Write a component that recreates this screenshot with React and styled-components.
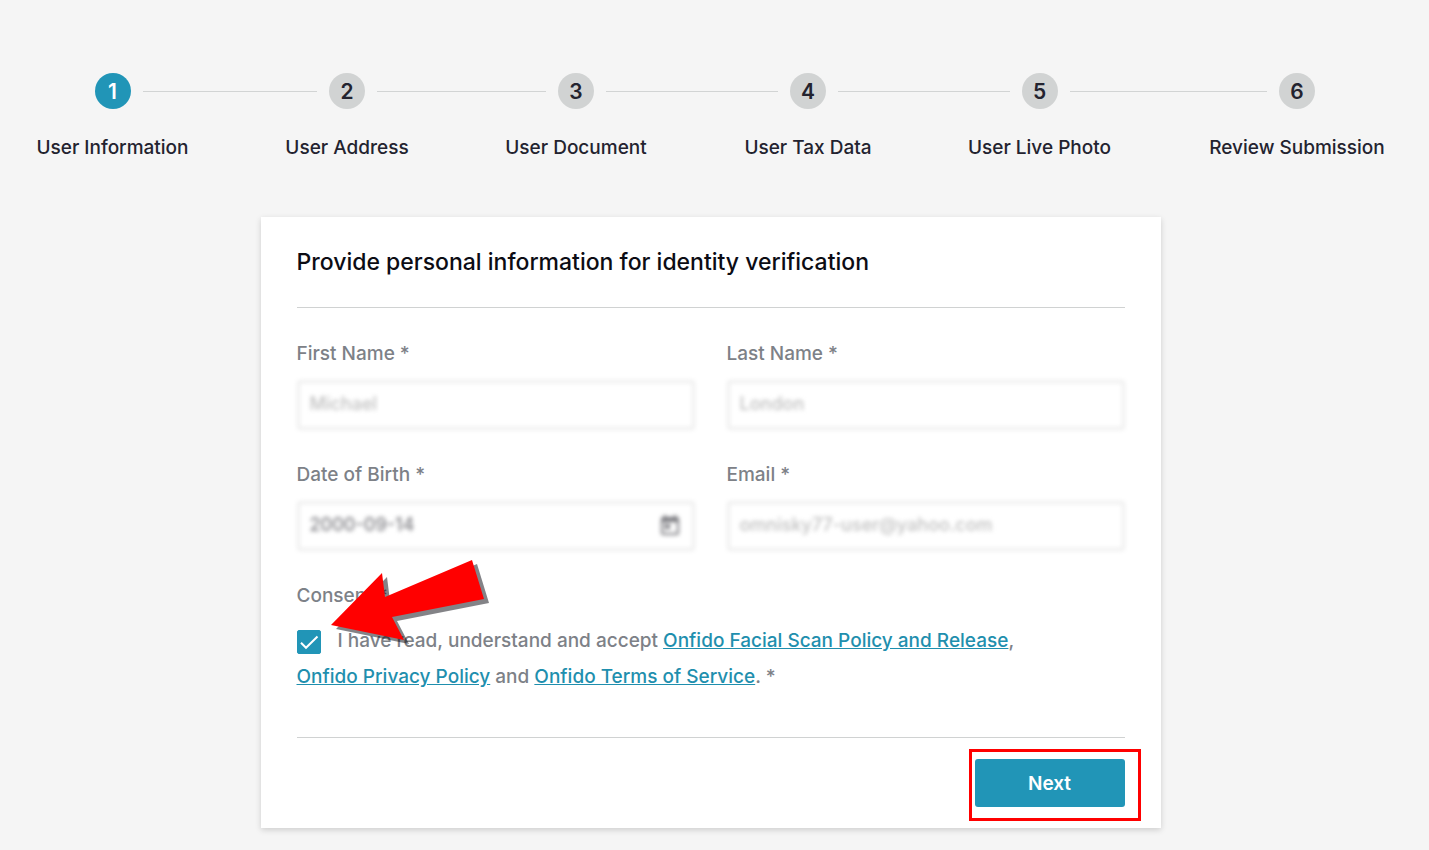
import React, { useState } from "react";
import styled, { createGlobalStyle } from "styled-components";
import { MdToday } from "react-icons/md";

const steps = [
  { label: "User Information", share: 157 },
  { label: "User Address", share: 122 },
  { label: "User Document", share: 146 },
  { label: "User Tax Data", share: 128 },
  { label: "User Live Photo", share: 145 },
  { label: "Review Submission", share: 180 },
];

const Stepper = ({ active }) => (
  <StepList>
    {steps.map(({ label, share }, i) => (
      <React.Fragment key={label}>
        {i > 0 && <Connector aria-hidden="true" />}
        <Step $share={share} aria-current={i === active ? "step" : undefined}>
          <StepHead>
            <Line $hidden={i === 0} />
            <Circle $active={i === active}>{i + 1}</Circle>
            <Line $hidden={i === steps.length - 1} />
          </StepHead>
          <StepLabel>{label}</StepLabel>
        </Step>
      </React.Fragment>
    ))}
  </StepList>
);

const TextField = ({ id, label, icon, dark, ...rest }) => (
  <Field>
    <FieldLabel htmlFor={id}>{label} *</FieldLabel>
    <Control>
      <Input id={id} $dark={dark} {...rest} />
      {icon}
    </Control>
  </Field>
);

const Arrow = () => (
  <ArrowSvg viewBox="0 0 160 86" width="160" height="86" aria-hidden="true">
    <polygon fill="#08080f" fillOpacity="0.5" points="5,69 56,17 59,41 146,4 158,43 66,61 78,84" />
    <polygon fill="#ff0000" points="0,65 51,13 54,37 141,0 153,39 61,57 73,80" />
  </ArrowSvg>
);

const App = () => {
  const [consent, setConsent] = useState(true);

  return (
    <Page>
      <GlobalStyle />
      <Stepper active={0} />
      <Card onSubmit={(e) => e.preventDefault()}>
        <Title>Provide personal information for identity verification</Title>
        <Fields>
          <TextField id="first-name" label="First Name" defaultValue="Michael" />
          <TextField id="last-name" label="Last Name" defaultValue="London" />
          <TextField id="birth" label="Date of Birth" defaultValue="2000-09-14" dark icon={<CalendarIcon />} />
          <TextField id="email" label="Email" type="email" defaultValue="omnisky77-user@yahoo.com" />
        </Fields>
        <Consent>
          <FieldLabel as="div">Consent *</FieldLabel>
          <ConsentText>
            <CheckWrap>
              <Checkbox
                id="consent"
                type="checkbox"
                checked={consent}
                onChange={(e) => setConsent(e.target.checked)}
              />
              {consent && (
                <svg viewBox="0 0 24 24" width="24" height="24" fill="none" stroke="#fff" strokeWidth="2">
                  <path d="M4 12.8l5 5L20.5 6.5" />
                </svg>
              )}
            </CheckWrap>
            <label htmlFor="consent">I have read, understand and accept</label>{" "}
            <Link href="#scan">Onfido Facial Scan Policy and Release</Link>,{" "}
            <Link href="#privacy">Onfido Privacy Policy</Link> and{" "}
            <Link href="#terms">Onfido Terms of Service</Link>. *
          </ConsentText>
          <Arrow />
        </Consent>
        <Footer>
          <Highlight>
            <NextButton type="submit">Next</NextButton>
          </Highlight>
        </Footer>
      </Card>
    </Page>
  );
};

const GlobalStyle = createGlobalStyle`
  * {
    box-sizing: border-box;
  }

  body {
    margin: 0;
    background: #f5f5f5;
    font-family: Inter, "Open Sans", sans-serif;
    font-size: 19px;
    font-weight: 500;
  }
`;

const Page = styled.main`
  display: flex;
  flex-direction: column;
  align-items: center;
  padding: 73px 42px 22px 34px;
`;

const StepList = styled.ol`
  display: flex;
  align-self: stretch;
  margin: 0 0 57px;
  padding: 0;
  list-style: none;
  color: #23232f;
`;

const Step = styled.li`
  flex: ${({ $share }) => $share} 1 0;
  min-width: 0;
`;

const StepHead = styled.div`
  display: flex;
  align-items: center;
`;

const Line = styled.span`
  flex: 1;
  height: 1px;
  background: ${({ $hidden }) => ($hidden ? "transparent" : "#d2d4d4")};
`;

const Connector = styled.li`
  flex: 95 1 0;
  height: 1px;
  margin-top: 18px;
  background: #d2d4d4;
`;

const Circle = styled.span`
  display: flex;
  align-items: center;
  justify-content: center;
  width: 36px;
  height: 36px;
  margin: 0 12px;
  border-radius: 50%;
  font-size: 21px;
  font-weight: 600;
  background: ${({ $active }) => ($active ? "#2195b7" : "#d1d3d3")};
  color: ${({ $active }) => ($active ? "#fff" : "#23232f")};
`;

const StepLabel = styled.div`
  display: flex;
  justify-content: center;
  margin-top: 27px;
  line-height: 24px;
  white-space: nowrap;
`;

const Card = styled.form`
  width: 100%;
  max-width: 900px;
  padding: 29px 36px 21px;
  background: #fff;
  box-shadow: 0 2px 6px rgba(0, 0, 0, 0.16);
`;

const Title = styled.h1`
  margin: 0;
  padding-bottom: 29px;
  border-bottom: 1px solid #d0d2d2;
  font-size: 23px;
  font-weight: 500;
  line-height: 32px;
  color: #0c0c14;
`;

const Fields = styled.div`
  display: grid;
  grid-template-columns: 1fr 1fr;
  gap: 33px 32px;
  padding: 34px 0 33px;
`;

const Field = styled.div`
  min-width: 0;
`;

const FieldLabel = styled.label`
  display: block;
  line-height: 24px;
  color: #7d8187;
`;

const Control = styled.div`
  display: flex;
  align-items: center;
  margin-top: 14px;
  border: 3px solid #ededed;
  border-radius: 4px;
  filter: blur(2px);
`;

const Input = styled.input`
  flex: 1;
  min-width: 0;
  height: 44px;
  padding: 0 10px 4px;
  border: 0;
  outline: 0;
  background: transparent;
  font: inherit;
  font-size: 18px;
  color: ${({ $dark }) => ($dark ? "#808085" : "#c0c0c0")};
`;

const CalendarIcon = styled(MdToday)`
  width: 24px;
  height: 24px;
  margin-right: 10px;
  color: #77777c;
`;

const Consent = styled.section`
  position: relative;
  padding-bottom: 42px;
  color: #7d8187;
`;

const ConsentText = styled.p`
  margin: 15px 0 0;
  line-height: 36px;
`;

const CheckWrap = styled.span`
  display: inline-grid;
  margin-right: 17px;
  line-height: 0;
  vertical-align: middle;

  & > * {
    grid-area: 1 / 1;
  }

  svg {
    pointer-events: none;
  }
`;

const Checkbox = styled.input`
  appearance: none;
  width: 24px;
  height: 24px;
  margin: 0;
  border: 1px solid #2195b7;
  border-radius: 2px;

  &:checked {
    background: #2195b7;
  }
`;

const Link = styled.a`
  color: #1f8fae;
  white-space: nowrap;
  text-decoration: underline;
`;

const ArrowSvg = styled.svg`
  position: absolute;
  top: -24px;
  left: 34px;
  pointer-events: none;
`;

const Footer = styled.footer`
  display: flex;
  justify-content: flex-end;
  padding-top: 21px;
  border-top: 1px solid #d0d2d2;
`;

const Highlight = styled.div`
  position: relative;

  &::after {
    content: "";
    position: absolute;
    inset: -10px -16px -14px -6px;
    border: 3px solid #ff0000;
    pointer-events: none;
  }
`;

const NextButton = styled.button`
  display: block;
  width: 150px;
  height: 48px;
  border: 0;
  border-radius: 3px;
  background: #2195b7;
  font: inherit;
  font-weight: 600;
  color: #fff;
  cursor: pointer;
`;

export default App;
